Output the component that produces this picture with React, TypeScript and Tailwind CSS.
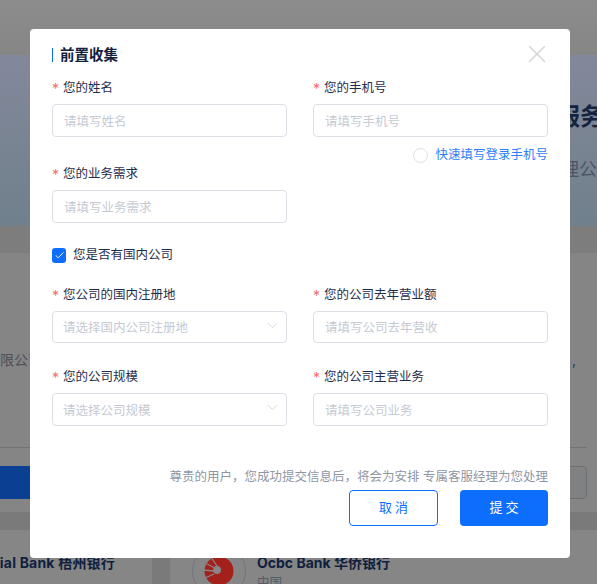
import { Check, ChevronDown, X } from "lucide-react";

const font = "font-['Inter','Noto_Sans_CJK_SC',sans-serif]";

function Label({ text }: { text: string }) {
  return (
    <div className="flex h-[17px] items-center text-[12.5px] leading-[17px] text-[#1f2d4d]">
      <span className="mr-[5px] mt-[1px] w-[6px] text-[14px] text-[#f56c6c]">*</span>
      {text}
    </div>
  );
}

function TextField({ label, placeholder, h = "h-[33px]" }: { label: string; placeholder: string; h?: string }) {
  return (
    <div className="w-[235px]">
      <Label text={label} />
      <div className={`mt-[8px] flex items-center rounded border border-[#dcdfe6] pl-[11px] pt-[3px] text-[12.5px] text-[#c6cad3] ${h}`}>
        {placeholder}
      </div>
    </div>
  );
}

function SelectField({ label, placeholder, h = "h-[33px]" }: { label: string; placeholder: string; h?: string }) {
  return (
    <div className="w-[235px]">
      <Label text={label} />
      <div className={`mt-[8px] flex items-center justify-between rounded border border-[#dcdfe6] pl-[10px] pr-[5px] pt-[3px] text-[12.5px] text-[#c6cad3] ${h}`}>
        <span>{placeholder}</span>
        <ChevronDown className="mb-[7px] h-[17px] w-[17px] text-[#c4c8d2]" strokeWidth={1} />
      </div>
    </div>
  );
}

function Backdrop() {
  return (
    <div className="flex h-[584px] w-[597px] flex-col overflow-hidden bg-[#858585]">
      <div className="h-[55px] shrink-0 bg-gradient-to-b from-[#8c8c8c] to-[#868686]" />
      <div className="flex h-[171px] shrink-0 flex-col bg-gradient-to-b from-[#83889a] to-[#70808c]">
        <div className="ml-[556px] mt-[48px] whitespace-nowrap text-[24px] font-bold leading-[28px] text-[#16233f]">
          服务
        </div>
        <div className="ml-[561px] mt-[29px] whitespace-nowrap text-[18px] leading-[20px] text-[#4b5566]">
          理公
        </div>
      </div>
      <div className="h-[27px] shrink-0 bg-[#7d7d7d]" />
      <div className="flex h-[259px] shrink-0 flex-col bg-[#858585]">
        <div className="mt-[96px] flex h-[20px] items-center justify-between text-[14px] text-[#4e5058]">
          <span className="w-[30px] overflow-hidden whitespace-nowrap">限公司</span>
          <span className="mr-[21px] text-[#333b4a]">,</span>
        </div>
        <div className="mr-[10px] mt-[78px] h-px bg-[#727272]" />
        <div className="mt-[18px] flex h-[33px] justify-between">
          <div className="w-[30px] bg-[#0a3f91]" />
          <div className="mr-[10px] w-[30px] rounded-r border border-[#6f6f6f] bg-[#7f8183]" />
        </div>
      </div>
      <div className="h-[18px] shrink-0 bg-[#7a7a7a]" />
      <div className="flex min-h-0 flex-1 gap-[18px] bg-[#7a7a7a]">
        <div className="flex w-[152px] items-start justify-end overflow-hidden bg-[#868686] pr-[37px]">
          <span className="mt-[24px] whitespace-nowrap text-[14px] font-bold leading-[18px] tracking-[0.2px] text-[#101f3d]">
            ial Bank 梧州银行
          </span>
        </div>
        <div className="flex flex-1 overflow-hidden bg-[#868686] pl-[21px]">
          <svg className="mt-[13px] h-[56px] w-[56px] shrink-0" viewBox="0 0 56 56" fill="none">
            <circle cx="28" cy="28" r="26.5" stroke="#757575" />
            <circle cx="28" cy="28" r="14.5" fill="#a3211a" />
            <circle cx="26" cy="27" r="4" fill="#868686" />
            <path d="M24 25L12 19M22.5 28L12 27M23 31L14 35M26 23L20 14" stroke="#868686" strokeWidth="1.3" />
          </svg>
          <div className="ml-[10px] mt-[24px] whitespace-nowrap">
            <div className="text-[14px] font-bold leading-[18px] text-[#101f3d]">Ocbc Bank 华侨银行</div>
            <div className="mt-[3px] text-[12.5px] leading-[16px] text-[#555c68]">中国</div>
          </div>
        </div>
      </div>
    </div>
  );
}

export default function App() {
  return (
    <div className={`relative h-[584px] w-[597px] overflow-hidden ${font}`}>
      <Backdrop />
      <div className="absolute left-[30px] top-[29px] h-[529px] w-[540px] rounded bg-white px-[22px]">
        <div className="relative flex h-[50px] items-start pt-[18px]">
          <div className="mt-[1px] h-[14px] w-px bg-[#0d6efd]" />
          <div className="ml-[7px] text-[14.5px] font-bold leading-[16px] text-[#14213d]">前置收集</div>
          <X className="absolute right-[-4px] top-[10px] h-[30px] w-[30px] text-[#d3d5d9]" strokeWidth={1.2} />
        </div>

        <div className="flex justify-between">
          <TextField label="您的姓名" placeholder="请填写姓名" />
          <div className="w-[235px]">
            <TextField label="您的手机号" placeholder="请填写手机号" />
            <div className="mt-[10px] flex h-[17px] items-center justify-end text-[12.5px] text-[#2f7dfa]">
              <span className="mr-[7px] h-[15px] w-[15px] rounded-full border border-[#dcdfe6]" />
              快速填写登录手机号
            </div>
          </div>
        </div>

        <div className="mt-[1px] w-[235px]">
          <TextField label="您的业务需求" placeholder="请填写业务需求" />
        </div>

        <div className="mt-[24px] flex h-[16px] items-center text-[12.5px] text-[#1f2d4d]">
          <span className="mr-[7px] flex h-[15px] w-[14px] items-center justify-center rounded-[3px] bg-[#0d6efd]">
            <Check className="h-[11px] w-[11px] text-white" strokeWidth={2} />
          </span>
          您是否有国内公司
        </div>

        <div className="mt-[23px] flex justify-between">
          <SelectField label="您公司的国内注册地" placeholder="请选择国内公司注册地" h="h-[32px]" />
          <TextField label="您的公司去年营业额" placeholder="请填写公司去年营收" h="h-[32px]" />
        </div>

        <div className="mt-[25px] flex justify-between">
          <SelectField label="您的公司规模" placeholder="请选择公司规模" />
          <TextField label="您的公司主营业务" placeholder="请填写公司业务" />
        </div>

        <div className="mt-[42px] h-[17px] text-right text-[12.5px] leading-[17px] text-[#8f96a3]">
          尊贵的用户，您成功提交信息后，将会为安排 专属客服经理为您处理
        </div>

        <div className="mt-[5px] flex justify-end gap-[22px]">
          <button className="h-[36px] w-[89px] rounded border border-[#0d6efd] bg-white pl-[3px] text-[13px] tracking-[3px] text-[#0d6efd]">
            取消
          </button>
          <button className="h-[36px] w-[88px] rounded bg-[#0d6efd] pl-[3px] text-[13px] tracking-[3px] text-white">
            提交
          </button>
        </div>
      </div>
    </div>
  );
}
